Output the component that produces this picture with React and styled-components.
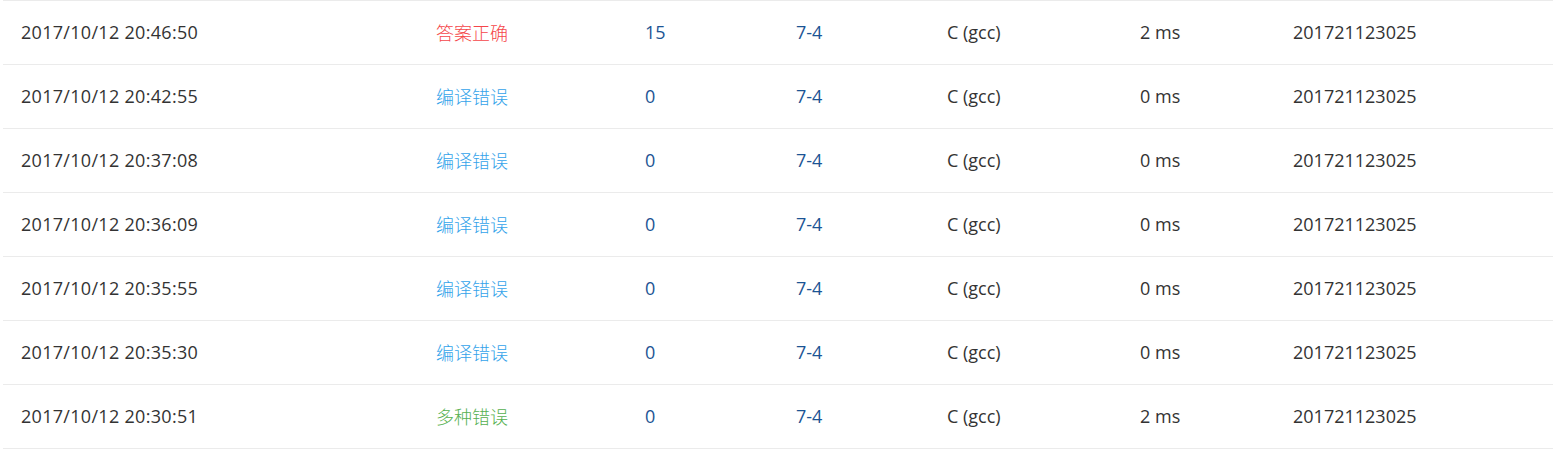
import React from "react";
import styled, { createGlobalStyle } from "styled-components";

const Global = createGlobalStyle`
  html, body { margin: 0; padding: 0; background: #fff; }
  body { font-family: "Open Sans", "Noto Sans CJK SC", sans-serif; }
`;

const Table = styled.div`
  margin-left: 3px;
  border-top: 1px solid #ebebeb;
`;

const Row = styled.div`
  display: grid;
  grid-template-columns: 415px 209px 151px 151px 193px 153px 1fr;
  height: 63px;
  align-items: center;
  border-bottom: 1px solid #ebebeb;
`;

const Cell = styled.div`
  padding-left: 18px;
  font-size: 18px;
  line-height: 24px;
  color: ${(p) => p.$color || "#333"};
  white-space: nowrap;
  margin-top: -2px;
`;

const DateCell = styled(Cell)`
  letter-spacing: 0.3px;
`;

const StatusCell = styled(Cell)`
  font-family: "Noto Sans CJK SC", sans-serif;
  font-size: 18px;
  font-weight: 300;
`;

const statusColors = {
  答案正确: "#f5464a",
  编译错误: "#33a3ea",
  多种错误: "#55b04f",
};

const rows = [
  ["2017/10/12 20:46:50", "答案正确", "15", "2 ms"],
  ["2017/10/12 20:42:55", "编译错误", "0", "0 ms"],
  ["2017/10/12 20:37:08", "编译错误", "0", "0 ms"],
  ["2017/10/12 20:36:09", "编译错误", "0", "0 ms"],
  ["2017/10/12 20:35:55", "编译错误", "0", "0 ms"],
  ["2017/10/12 20:35:30", "编译错误", "0", "0 ms"],
  ["2017/10/12 20:30:51", "多种错误", "0", "2 ms"],
];

export default function App() {
  return (
    <>
      <Global />
      <Table>
        {rows.map(([time, status, score, ms], i) => (
          <Row key={i}>
            <DateCell>{time}</DateCell>
            <StatusCell $color={statusColors[status]}>{status}</StatusCell>
            <Cell $color="#1c5494">{score}</Cell>
            <Cell $color="#1c5494">7-4</Cell>
            <Cell>C (gcc)</Cell>
            <Cell>{ms}</Cell>
            <Cell>201721123025</Cell>
          </Row>
        ))}
      </Table>
    </>
  );
}
